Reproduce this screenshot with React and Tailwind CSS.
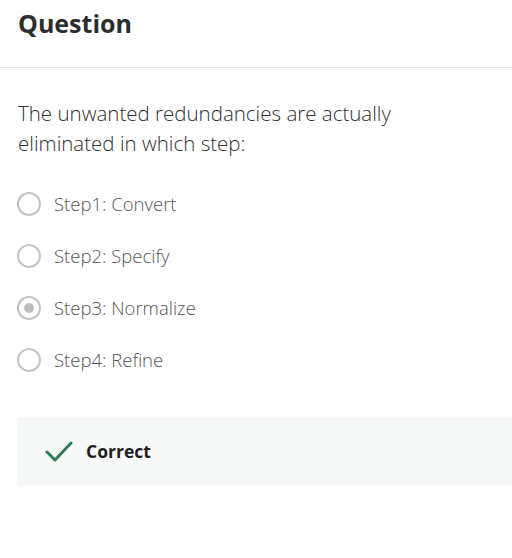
import React from "react";

const options = [
  { id: 1, label: "Step1: Convert" },
  { id: 2, label: "Step2: Specify" },
  { id: 3, label: "Step3: Normalize", checked: true },
  { id: 4, label: "Step4: Refine" },
];

const Radio = ({ checked }) => (
  <span className="w-6 h-6 rounded-full border-2 border-[#c4c4c4] flex items-center justify-center shrink-0">
    {checked && <span className="w-[10px] h-[10px] rounded-full bg-[#bdbdbd]" />}
  </span>
);

export default function App() {
  return (
    <div
      className="w-[512px] h-[558px] bg-white overflow-hidden"
      style={{ fontFamily: '"Open Sans", sans-serif' }}
    >
      {/* header */}
      <div className="h-[68px] border-b border-[#e2e2e2] px-[18px] pt-[5px]">
        <h1 className="text-[25px] leading-[36px] font-bold text-[#2d2d2d]">
          Question
        </h1>
      </div>

      {/* body */}
      <div className="pl-[17px] pt-[30px]">
        <p className="text-[20.5px] leading-[30px] font-light text-[#2f2f2f] pl-[1px] pr-[100px]">
          The unwanted redundancies are actually eliminated in which step:
        </p>

        <div className="mt-[34px] flex flex-col gap-[28px]">
          {options.map((o) => (
            <label key={o.id} className="flex items-center gap-[13px] h-6">
              <Radio checked={o.checked} />
              <span className="text-[18.5px] font-light text-[#555]">{o.label}</span>
            </label>
          ))}
        </div>

        {/* feedback */}
        <div className="mt-[45px] h-[69px] bg-[#f6f9f8] flex items-center pl-[28px] gap-[13px]">
          <svg width="28" height="24" viewBox="0 0 28 24" fill="none">
            <path
              d="M2 12 L10 20 L26 3"
              stroke="#2f7a58"
              strokeWidth="3"
              strokeLinecap="round"
              strokeLinejoin="round"
            />
          </svg>
          <span className="text-[17.5px] font-bold text-[#1f1f1f]">Correct</span>
        </div>
      </div>
    </div>
  );
}
